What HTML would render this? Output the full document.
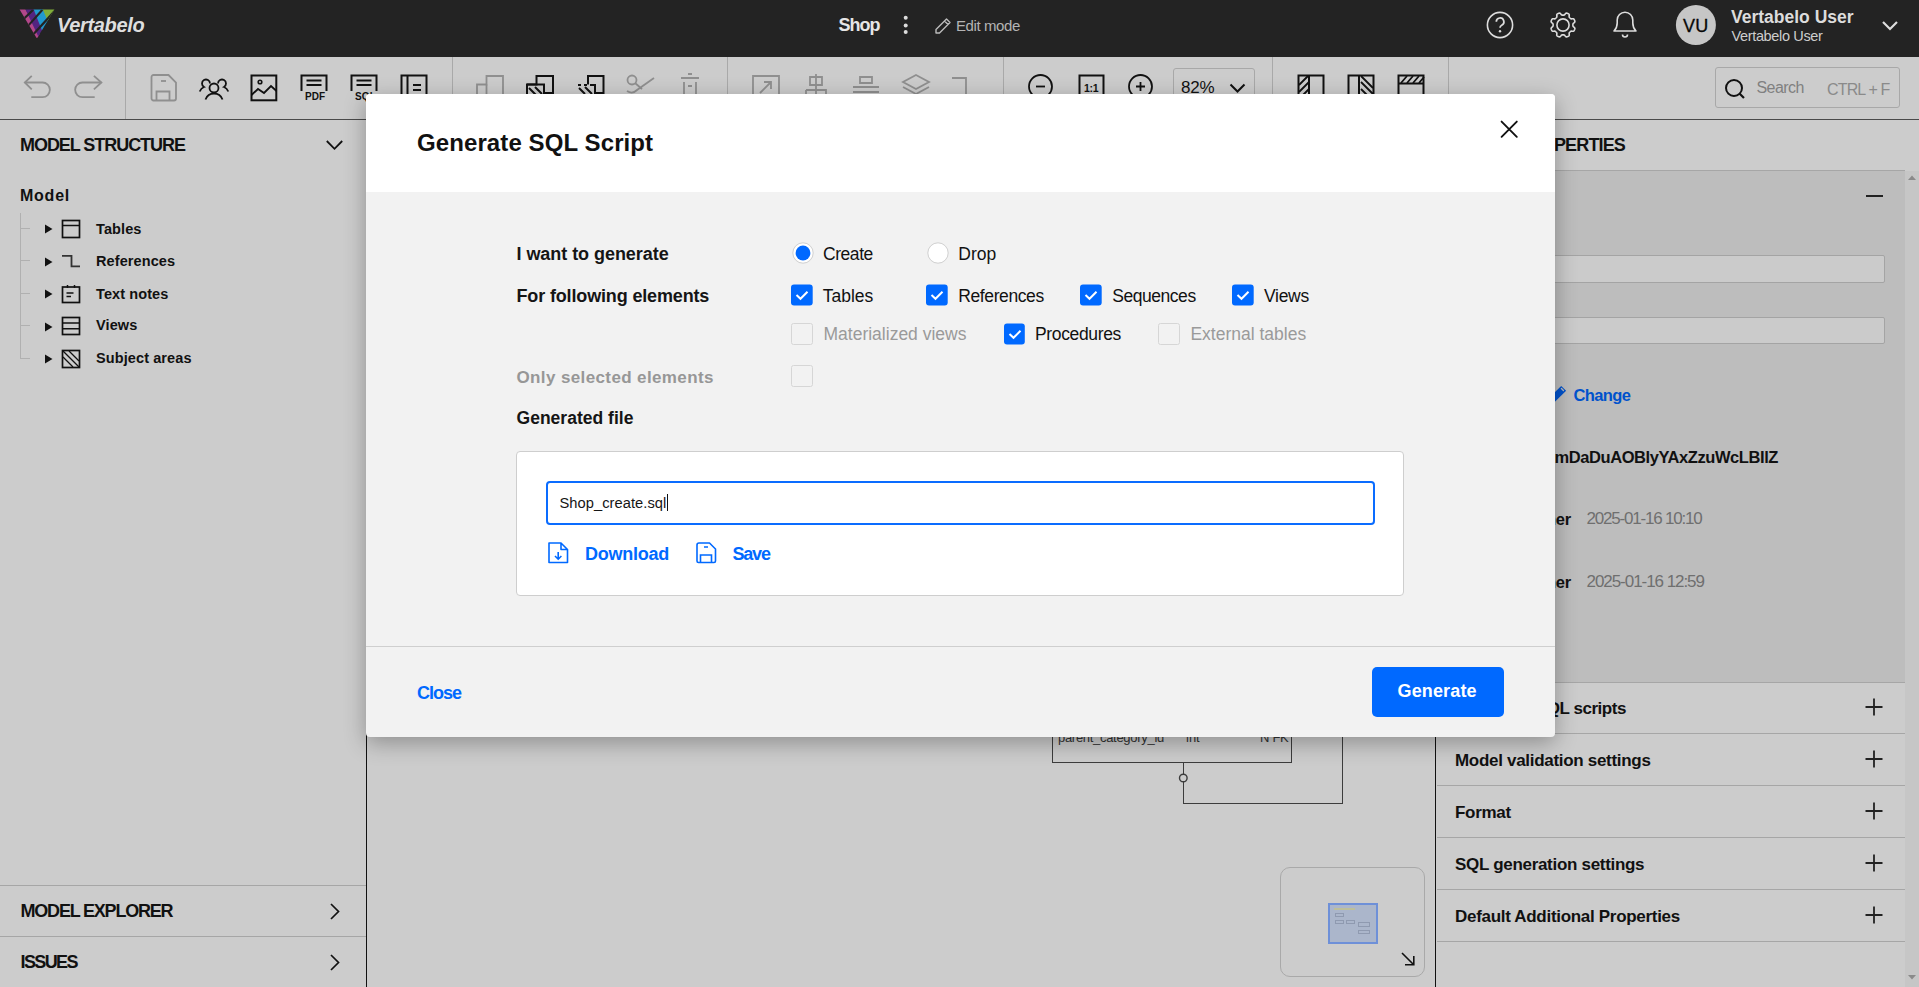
<!DOCTYPE html><html><head><meta charset="utf-8"><style>
html,body{margin:0;padding:0;width:1919px;height:987px;overflow:hidden;background:#cccccc;}
body{position:relative;font-family:"Liberation Sans",sans-serif;}
.t{position:absolute;white-space:nowrap;}
.r{position:absolute;}
.s{position:absolute;overflow:visible;}
</style></head><body>
<div class="r" style="left:0px;top:0px;width:1919px;height:57px;background:#232323;"></div>
<svg class="s" style="left:15px;top:5px;" width="45" height="40" viewBox="0 0 45 40">
<clipPath id="tri"><path d="M4.6 4.6 L39.4 4.6 L21.9 33.6 Z"/></clipPath>
<g clip-path="url(#tri)">
<path d="M0 4 L10.3 4 L27 33 L16 33 Z" fill="#b3478a"/>
<path d="M10.3 4 L18.5 4 L33 30 L24 33 Z" fill="#532480"/>
<path d="M18.5 4 L27.6 4 L40 26 L30 33 Z" fill="#2199cf"/>
<path d="M27.6 4 L42 4 L42 22 L36 24 Z" fill="#80ad3a"/>
<path d="M7.6 13.4 L17.2 4.2 L19 5.6 L9.4 14.8 Z" fill="#232323"/>
<path d="M12.5 19.9 L26.4 4.2 L28.2 5.4 L14.3 21.1 Z" fill="#232323"/>
<path d="M17.6 28.4 L38.6 5.6 L40.4 7 L19.4 29.8 Z" fill="#232323"/>
</g></svg>
<div class="t " style="left:57px;top:14.77px;font-size:20px;line-height:20px;font-weight:700;color:#dedede;letter-spacing:-0.35px;font-style:italic;">Vertabelo</div>
<div class="t " style="left:838.5px;top:15.76px;font-size:18px;line-height:18px;font-weight:700;color:#e6e6e6;letter-spacing:-1.0px;">Shop</div>
<svg class="s" style="left:901px;top:15px;" width="10" height="20" viewBox="0 0 10 20"><circle cx="4.7" cy="2.8" r="2" fill="#ddd"/><circle cx="4.7" cy="10.5" r="2" fill="#ddd"/><circle cx="4.7" cy="17" r="2" fill="#ddd"/></svg>
<svg class="s" style="left:934px;top:16px;" width="19" height="19" viewBox="0 0 19 19"><path d="M2 13.5 L12.5 3 L16 6.5 L5.5 17 L2 17 Z M10.5 5 L14 8.5" fill="none" stroke="#bbb" stroke-width="1.4" stroke-linejoin="round"/></svg>
<div class="t " style="left:956px;top:18.30px;font-size:15px;line-height:15px;font-weight:400;color:#b4b4b4;letter-spacing:-0.4px;">Edit mode</div>
<svg class="s" style="left:1485px;top:10px;" width="30" height="30" viewBox="0 0 30 30"><circle cx="15" cy="15" r="12.6" fill="none" stroke="#ddd" stroke-width="1.6"/><path d="M11.3 11.8 a3.8 3.8 0 1 1 5.4 3.4 c-1.2 0.6 -1.7 1.3 -1.7 2.6" fill="none" stroke="#ddd" stroke-width="1.7"/><circle cx="15" cy="21.2" r="1.2" fill="#ddd"/></svg>
<svg class="s" style="left:1547.5px;top:10px;" width="30" height="30" viewBox="0 0 30 30"><path d="M15.00 5.10 L15.39 5.10 L15.78 5.09 L16.18 5.02 L16.63 4.72 L17.19 4.02 L17.80 3.34 L18.35 3.12 L18.85 3.15 L19.32 3.28 L19.78 3.45 L20.23 3.66 L20.66 3.90 L21.03 4.23 L21.26 4.78 L21.22 5.69 L21.12 6.58 L21.22 7.10 L21.46 7.44 L21.73 7.72 L22.00 8.00 L22.28 8.27 L22.56 8.54 L22.90 8.78 L23.42 8.88 L24.31 8.78 L25.22 8.74 L25.77 8.97 L26.10 9.34 L26.34 9.77 L26.55 10.22 L26.72 10.68 L26.85 11.15 L26.88 11.65 L26.66 12.20 L25.98 12.81 L25.28 13.37 L24.98 13.82 L24.91 14.22 L24.90 14.61 L24.90 15.00 L24.90 15.39 L24.91 15.78 L24.98 16.18 L25.28 16.63 L25.98 17.19 L26.66 17.80 L26.88 18.35 L26.85 18.85 L26.72 19.32 L26.55 19.78 L26.34 20.23 L26.10 20.66 L25.77 21.03 L25.22 21.26 L24.31 21.22 L23.42 21.12 L22.90 21.22 L22.56 21.46 L22.28 21.73 L22.00 22.00 L21.73 22.28 L21.46 22.56 L21.22 22.90 L21.12 23.42 L21.22 24.31 L21.26 25.22 L21.03 25.77 L20.66 26.10 L20.23 26.34 L19.78 26.55 L19.32 26.72 L18.85 26.85 L18.35 26.88 L17.80 26.66 L17.19 25.98 L16.63 25.28 L16.18 24.98 L15.78 24.91 L15.39 24.90 L15.00 24.90 L14.61 24.90 L14.22 24.91 L13.82 24.98 L13.37 25.28 L12.81 25.98 L12.20 26.66 L11.65 26.88 L11.15 26.85 L10.68 26.72 L10.22 26.55 L9.77 26.34 L9.34 26.10 L8.97 25.77 L8.74 25.22 L8.78 24.31 L8.88 23.42 L8.78 22.90 L8.54 22.56 L8.27 22.28 L8.00 22.00 L7.72 21.73 L7.44 21.46 L7.10 21.22 L6.58 21.12 L5.69 21.22 L4.78 21.26 L4.23 21.03 L3.90 20.66 L3.66 20.23 L3.45 19.78 L3.28 19.32 L3.15 18.85 L3.12 18.35 L3.34 17.80 L4.02 17.19 L4.72 16.63 L5.02 16.18 L5.09 15.78 L5.10 15.39 L5.10 15.00 L5.10 14.61 L5.09 14.22 L5.02 13.82 L4.72 13.37 L4.02 12.81 L3.34 12.20 L3.12 11.65 L3.15 11.15 L3.28 10.68 L3.45 10.22 L3.66 9.77 L3.90 9.34 L4.23 8.97 L4.78 8.74 L5.69 8.78 L6.58 8.88 L7.10 8.78 L7.44 8.54 L7.72 8.27 L8.00 8.00 L8.27 7.72 L8.54 7.44 L8.78 7.10 L8.88 6.58 L8.78 5.69 L8.74 4.78 L8.97 4.23 L9.34 3.90 L9.77 3.66 L10.22 3.45 L10.68 3.28 L11.15 3.15 L11.65 3.12 L12.20 3.34 L12.81 4.02 L13.37 4.72 L13.82 5.02 L14.22 5.09 L14.61 5.10 Z" fill="none" stroke="#ddd" stroke-width="1.6" stroke-linejoin="round"/><circle cx="15" cy="15" r="6.1" fill="none" stroke="#ddd" stroke-width="1.6"/></svg>
<svg class="s" style="left:1610px;top:8.2px;" width="30" height="30" viewBox="0 0 30 30"><path d="M4 23 h22 c-2 -2 -3.2 -4 -3.2 -8 v-3 a7.8 7.8 0 0 0 -15.6 0 v3 c0 4 -1.2 6 -3.2 8 Z" fill="none" stroke="#ddd" stroke-width="1.6" stroke-linejoin="round"/><path d="M12.5 26.5 a2.5 2.5 0 0 0 5 0" fill="none" stroke="#ddd" stroke-width="1.6"/></svg>
<svg class="s" style="left:1675px;top:5px;" width="42" height="42" viewBox="0 0 42 42"><circle cx="20.9" cy="20" r="20" fill="#c6c6c6"/></svg>
<div class="t " style="left:1683px;top:16.76px;font-size:18px;line-height:18px;font-weight:400;color:#080808;letter-spacing:0.2px;-webkit-text-stroke:0.3px #080808;">VU</div>
<div class="t " style="left:1731px;top:9.49px;font-size:17.5px;line-height:17.5px;font-weight:700;color:#dcdcdc;letter-spacing:0px;">Vertabelo User</div>
<div class="t " style="left:1731.5px;top:28.93px;font-size:14.5px;line-height:14.5px;font-weight:400;color:#cdcdcd;letter-spacing:-0.35px;">Vertabelo User</div>
<svg class="s" style="left:1880px;top:18px;" width="20" height="14" viewBox="0 0 20 14"><path d="M3 4 L10 11 L17 4" fill="none" stroke="#ddd" stroke-width="2.2"/></svg>
<div class="r" style="left:125px;top:57px;width:1px;height:62px;background:#a9a9a9;"></div>
<div class="r" style="left:451.5px;top:57px;width:1px;height:62px;background:#a9a9a9;"></div>
<div class="r" style="left:727px;top:57px;width:1px;height:62px;background:#a9a9a9;"></div>
<div class="r" style="left:1003px;top:57px;width:1px;height:62px;background:#a9a9a9;"></div>
<div class="r" style="left:1272px;top:57px;width:1px;height:62px;background:#a9a9a9;"></div>
<div class="r" style="left:1448px;top:57px;width:1px;height:62px;background:#a9a9a9;"></div>
<div class="r" style="left:0px;top:119px;width:1919px;height:1px;background:#4a4a4a;"></div>
<svg class="s" style="left:22px;top:74px;" width="32" height="26" viewBox="0 0 32 26"><path d="M2.8 8.5 H20.5 A7.35 7.35 0 0 1 20.5 23.2 H9.3" fill="none" stroke="#8f8f8f" stroke-width="1.8"/><path d="M9.75 1.9 L2.8 8.5 L9.75 15.4" fill="none" stroke="#8f8f8f" stroke-width="1.8"/></svg>
<svg class="s" style="left:73px;top:74px;" width="32" height="26" viewBox="0 0 32 26"><path d="M28.4 8.5 H9.5 A7.35 7.35 0 0 0 9.5 23.2 H21.7" fill="none" stroke="#8f8f8f" stroke-width="1.8"/><path d="M20.9 1.9 L28.4 8.5 L20.9 15.4" fill="none" stroke="#8f8f8f" stroke-width="1.8"/></svg>
<svg class="s" style="left:149px;top:73px;" width="30" height="30" viewBox="0 0 30 30"><path d="M2.5 4 a2 2 0 0 1 2 -2 h15 l7.5 7.5 v16 a2 2 0 0 1 -2 2 h-20.5 a2 2 0 0 1 -2 -2 Z" fill="none" stroke="#8f8f8f" stroke-width="1.8"/><path d="M7.5 27 v-8.5 h13 v8.5" fill="none" stroke="#8f8f8f" stroke-width="1.8"/><path d="M12 8 h5" stroke="#8f8f8f" stroke-width="1.8"/></svg>
<svg class="s" style="left:198px;top:76px;" width="32" height="26" viewBox="0 0 32 26"><circle cx="16" cy="12" r="4.5" fill="none" stroke="#111111" stroke-width="1.8"/><path d="M7.5 23.5 c1.5 -4 4.5 -6 8.5 -6 s7 2 8.5 6" fill="none" stroke="#111111" stroke-width="1.8"/><path d="M12 7.5 a4 4 0 1 0 -6 3.5 c-2 0.8 -3.5 2.5 -4.3 4.5" fill="none" stroke="#111111" stroke-width="1.8"/><path d="M20 7.5 a4 4 0 1 1 6 3.5 c2 0.8 3.5 2.5 4.3 4.5" fill="none" stroke="#111111" stroke-width="1.8"/></svg>
<svg class="s" style="left:249px;top:73px;" width="30" height="30" viewBox="0 0 30 30"><rect x="2.5" y="2.5" width="24.8" height="24.8" fill="none" stroke="#111111" stroke-width="2"/><circle cx="11" cy="9" r="1.8" fill="none" stroke="#111111" stroke-width="1.6"/><path d="M2.5 22 L9 16 L15 20 L22 13 L27.5 18" fill="none" stroke="#111111" stroke-width="1.8"/></svg>
<svg class="s" style="left:299px;top:73px;" width="30" height="20" viewBox="0 0 30 20"><path d="M2.5 18 V2.5 H27.5 V18" fill="none" stroke="#111111" stroke-width="2"/><path d="M7.5 7.5 h15 M7.5 12 h15" stroke="#111111" stroke-width="1.8"/></svg>
<div class="t " style="left:305px;top:92.33px;font-size:10px;line-height:10px;font-weight:700;color:#111111;letter-spacing:0.1px;">PDF</div>
<svg class="s" style="left:349px;top:73px;" width="30" height="20" viewBox="0 0 30 20"><path d="M2.5 18 V2.5 H27.5 V18" fill="none" stroke="#111111" stroke-width="2"/><path d="M7.5 7.5 h15 M7.5 12 h15" stroke="#111111" stroke-width="1.8"/></svg>
<div class="t " style="left:355px;top:92.33px;font-size:10px;line-height:10px;font-weight:700;color:#111111;letter-spacing:0.1px;">SQL</div>
<svg class="s" style="left:399px;top:73px;" width="30" height="22" viewBox="0 0 30 22"><path d="M2.5 22 V2.5 H27.5 V22" fill="none" stroke="#111111" stroke-width="2"/><path d="M8.5 2.5 V22" stroke="#111111" stroke-width="2"/><path d="M14 12 h8 M14 17 h8" stroke="#111111" stroke-width="1.8"/></svg>
<svg class="s" style="left:474px;top:73px;" width="32" height="22" viewBox="0 0 32 22"><path d="M3 22 V11.5 H12.5 V3 H29 V22" fill="none" stroke="#8f8f8f" stroke-width="1.8"/><path d="M12.5 11.5 V22" stroke="#8f8f8f" stroke-width="1.8"/></svg>
<svg class="s" style="left:524px;top:73px;" width="32" height="22" viewBox="0 0 32 22"><path d="M3 22 V11.5 H12.5 V3 H29 V20 H20" fill="none" stroke="#111111" stroke-width="2"/><path d="M3 11.5 H20 V22 M5 15 L12 22 M11 14 L18 21" fill="none" stroke="#111111" stroke-width="2"/></svg>
<svg class="s" style="left:575px;top:73px;" width="32" height="22" viewBox="0 0 32 22"><path d="M13 11.5 V3 H28.5 V20 H20" fill="none" stroke="#111111" stroke-width="2"/><path d="M3 12 H6 M9 12 H12 M15 12 H20 V22 M4 15 L10 21 M10 14 L17 21" fill="none" stroke="#111111" stroke-width="2"/></svg>
<svg class="s" style="left:624px;top:73px;" width="32" height="22" viewBox="0 0 32 22"><circle cx="8" cy="7" r="4.5" fill="none" stroke="#8f8f8f" stroke-width="1.8"/><path d="M11 10 L18 16 M30 5 L13 17 C10 20 6 20 3 18" fill="none" stroke="#8f8f8f" stroke-width="1.8"/></svg>
<svg class="s" style="left:676px;top:73px;" width="28" height="22" viewBox="0 0 28 22"><path d="M5 5 h18 M12 1 h4 M8 9 V22 M20 9 V22 M12 13 h4" fill="none" stroke="#8f8f8f" stroke-width="1.8"/></svg>
<svg class="s" style="left:750px;top:73px;" width="32" height="22" viewBox="0 0 32 22"><path d="M3 22 V3 H29 V22" fill="none" stroke="#8f8f8f" stroke-width="1.8"/><path d="M10 20 L21 9 M14 9 h7 v7" fill="none" stroke="#8f8f8f" stroke-width="1.8"/></svg>
<svg class="s" style="left:802px;top:73px;" width="28" height="22" viewBox="0 0 28 22"><path d="M8 4 h12 v8 h-12 Z M14 1 V22 M4 17 h20 V22 M4 17 V22" fill="none" stroke="#8f8f8f" stroke-width="1.8"/></svg>
<svg class="s" style="left:851px;top:73px;" width="30" height="22" viewBox="0 0 30 22"><path d="M9 4 h12 v6 h-12 Z M2 14 h26 M2 19 h26" fill="none" stroke="#8f8f8f" stroke-width="1.8"/></svg>
<svg class="s" style="left:901px;top:73px;" width="30" height="22" viewBox="0 0 30 22"><path d="M15 2 L28 9 L15 16 L2 9 Z M2 14 L15 21 L28 14" fill="none" stroke="#8f8f8f" stroke-width="1.8"/></svg>
<svg class="s" style="left:951px;top:73px;" width="18" height="22" viewBox="0 0 18 22"><path d="M1 5 h14 V22" fill="none" stroke="#8f8f8f" stroke-width="1.8"/></svg>
<svg class="s" style="left:1027px;top:73px;" width="28" height="22" viewBox="0 0 28 22"><circle cx="13.5" cy="13.5" r="11.5" fill="none" stroke="#111111" stroke-width="1.8"/><path d="M9 13.5 h9" stroke="#111111" stroke-width="1.8"/></svg>
<svg class="s" style="left:1077px;top:73px;" width="30" height="22" viewBox="0 0 30 22"><path d="M2.5 22 V2.5 H26.5 V22" fill="none" stroke="#111111" stroke-width="2"/></svg>
<div class="t " style="left:1084px;top:83.11px;font-size:10.5px;line-height:10.5px;font-weight:700;color:#111111;letter-spacing:-0.3px;">1:1</div>
<svg class="s" style="left:1127px;top:73px;" width="28" height="22" viewBox="0 0 28 22"><circle cx="13.5" cy="13.5" r="11.5" fill="none" stroke="#111111" stroke-width="1.8"/><path d="M9 13.5 h9 M13.5 9 v9" stroke="#111111" stroke-width="1.8"/></svg>
<div class="r" style="left:1172.5px;top:67.5px;width:82px;height:40px;background:none;border:1px solid #a8a8a8;box-sizing:border-box;border-radius:3px;"></div>
<div class="t " style="left:1181px;top:79.11px;font-size:17px;line-height:17px;font-weight:400;color:#111;letter-spacing:-0.2px;">82%</div>
<svg class="s" style="left:1228px;top:82px;" width="20" height="12" viewBox="0 0 20 12"><path d="M2.5 2.5 L9.5 9.5 L16.5 2.5" fill="none" stroke="#111111" stroke-width="2"/></svg>
<svg class="s" style="left:1296px;top:73px;" width="30" height="22" viewBox="0 0 30 22"><path d="M2.5 22 V2.5 H27.5 V22 M13 2.5 V22" fill="none" stroke="#111111" stroke-width="2"/><path d="M3 12 L12 3 M3 19 L13 9 M7 22 L13 16" stroke="#111111" stroke-width="1.8"/></svg>
<svg class="s" style="left:1346px;top:73px;" width="30" height="22" viewBox="0 0 30 22"><path d="M2.5 22 V2.5 H27.5 V22 M13 2.5 V22" fill="none" stroke="#111111" stroke-width="2"/><path d="M15 3 L27 15 M15 9 L27 21 M15 16 L21 22" stroke="#111111" stroke-width="1.8"/></svg>
<svg class="s" style="left:1396px;top:73px;" width="30" height="22" viewBox="0 0 30 22"><path d="M2.5 22 V2.5 H27.5 V22 M2.5 10.5 H27.5" fill="none" stroke="#111111" stroke-width="2"/><path d="M5 10 L11 3 M11 10 L17 3 M17 10 L23 3 M23 10 L28 4" stroke="#111111" stroke-width="1.8"/></svg>
<div class="r" style="left:1715px;top:67px;width:185px;height:40.5px;background:none;border:1px solid #a8a8a8;box-sizing:border-box;border-radius:3px;"></div>
<svg class="s" style="left:1724px;top:78px;" width="24" height="22" viewBox="0 0 24 22"><circle cx="10" cy="10" r="8" fill="none" stroke="#111111" stroke-width="2"/><path d="M15.5 15.5 L20 20" stroke="#111111" stroke-width="2.2"/></svg>
<div class="t " style="left:1756.5px;top:80.46px;font-size:16px;line-height:16px;font-weight:400;color:#808080;letter-spacing:-0.55px;">Search</div>
<div class="t " style="left:1827px;top:81.86px;font-size:16px;line-height:16px;font-weight:400;color:#8a8a8a;letter-spacing:-0.85px;">CTRL + F</div>
<div class="t " style="left:20px;top:136.06px;font-size:18px;line-height:18px;font-weight:700;color:#111;letter-spacing:-1.05px;">MODEL STRUCTURE</div>
<svg class="s" style="left:322.5px;top:137.2px;" width="24" height="16" viewBox="0 0 24 16"><path d="M3.8 4 L11.5 11.8 L19.2 4" fill="none" stroke="#111" stroke-width="1.8"/></svg>
<div class="t " style="left:20px;top:187.96px;font-size:16px;line-height:16px;font-weight:700;color:#111;letter-spacing:0.75px;">Model</div>
<div class="r" style="left:20px;top:213px;width:1px;height:146px;background:#b0b0b0;"></div>
<div class="r" style="left:20px;top:227.9px;width:10px;height:1px;background:#b0b0b0;"></div>
<svg class="s" style="left:44px;top:224.4px;" width="10" height="10" viewBox="0 0 10 10"><path d="M1 0.5 L8.5 5 L1 9.5 Z" fill="#111"/></svg>
<div class="t " style="left:96px;top:221.93px;font-size:14.5px;line-height:14.5px;font-weight:700;color:#111;letter-spacing:0.1px;">Tables</div>
<div class="r" style="left:20px;top:260.3px;width:10px;height:1px;background:#b0b0b0;"></div>
<svg class="s" style="left:44px;top:256.8px;" width="10" height="10" viewBox="0 0 10 10"><path d="M1 0.5 L8.5 5 L1 9.5 Z" fill="#111"/></svg>
<div class="t " style="left:96px;top:254.03px;font-size:14.5px;line-height:14.5px;font-weight:700;color:#111;letter-spacing:0.1px;">References</div>
<div class="r" style="left:20px;top:292.8px;width:10px;height:1px;background:#b0b0b0;"></div>
<svg class="s" style="left:44px;top:289.3px;" width="10" height="10" viewBox="0 0 10 10"><path d="M1 0.5 L8.5 5 L1 9.5 Z" fill="#111"/></svg>
<div class="t " style="left:96px;top:286.53px;font-size:14.5px;line-height:14.5px;font-weight:700;color:#111;letter-spacing:0.1px;">Text notes</div>
<div class="r" style="left:20px;top:325.0px;width:10px;height:1px;background:#b0b0b0;"></div>
<svg class="s" style="left:44px;top:321.5px;" width="10" height="10" viewBox="0 0 10 10"><path d="M1 0.5 L8.5 5 L1 9.5 Z" fill="#111"/></svg>
<div class="t " style="left:96px;top:318.43px;font-size:14.5px;line-height:14.5px;font-weight:700;color:#111;letter-spacing:0.1px;">Views</div>
<div class="r" style="left:20px;top:357.8px;width:10px;height:1px;background:#b0b0b0;"></div>
<svg class="s" style="left:44px;top:354.3px;" width="10" height="10" viewBox="0 0 10 10"><path d="M1 0.5 L8.5 5 L1 9.5 Z" fill="#111"/></svg>
<div class="t " style="left:96px;top:351.23px;font-size:14.5px;line-height:14.5px;font-weight:700;color:#111;letter-spacing:0.1px;">Subject areas</div>
<svg class="s" style="left:61px;top:219px;" width="20" height="20" viewBox="0 0 20 20"><rect x="1.5" y="1.5" width="17" height="17" fill="none" stroke="#111" stroke-width="1.7"/><path d="M1.5 6.5 h17" stroke="#111" stroke-width="1.5"/></svg>
<svg class="s" style="left:61px;top:253px;" width="20" height="16" viewBox="0 0 20 16"><path d="M1 2.8 H10.5 V13.3 H19" fill="none" stroke="#333" stroke-width="1.8"/></svg>
<svg class="s" style="left:61px;top:284px;" width="20" height="20" viewBox="0 0 20 20"><rect x="1.5" y="3" width="17" height="15.5" fill="none" stroke="#111" stroke-width="1.7"/><path d="M6.5 1 v3 M13.5 1 v3 M5.5 9 h7 M5.5 12.6 h4.5" stroke="#111" stroke-width="1.5"/></svg>
<svg class="s" style="left:61px;top:316px;" width="20" height="20" viewBox="0 0 20 20"><rect x="1.5" y="1.5" width="17" height="17" fill="none" stroke="#111" stroke-width="1.7"/><path d="M1.5 7 h17 M1.5 12.8 h17" stroke="#111" stroke-width="1.5"/></svg>
<svg class="s" style="left:61px;top:349px;" width="20" height="20" viewBox="0 0 20 20"><rect x="1.5" y="1.5" width="17" height="17" fill="none" stroke="#111" stroke-width="1.7"/><path d="M2 8 L12 18 M2 2 L18 18 M8 2 L18 12" stroke="#111" stroke-width="1.3"/></svg>
<div class="r" style="left:0px;top:885px;width:366px;height:1px;background:#a6a6a6;"></div>
<div class="t " style="left:20.5px;top:901.76px;font-size:18px;line-height:18px;font-weight:700;color:#111;letter-spacing:-1.2px;">MODEL EXPLORER</div>
<svg class="s" style="left:326px;top:901px;" width="16" height="22" viewBox="0 0 16 22"><path d="M5 3 L12.5 10.5 L5 18" fill="none" stroke="#111" stroke-width="1.7"/></svg>
<div class="r" style="left:0px;top:936px;width:366px;height:1px;background:#a6a6a6;"></div>
<div class="t " style="left:20.5px;top:952.76px;font-size:18px;line-height:18px;font-weight:700;color:#111;letter-spacing:-1.6px;">ISSUES</div>
<svg class="s" style="left:326px;top:952px;" width="16" height="22" viewBox="0 0 16 22"><path d="M5 3 L12.5 10.5 L5 18" fill="none" stroke="#111" stroke-width="1.7"/></svg>
<div class="r" style="left:366px;top:119px;width:1px;height:868px;background:#111;"></div>
<div class="r" style="left:1052.3px;top:700px;width:239.7px;height:62.5px;background:none;border:1.6px solid #3c3c3c;box-sizing:border-box;"></div>
<div class="t " style="left:1058px;top:731.00px;font-size:13px;line-height:13px;font-weight:400;color:#333;letter-spacing:-0.3px;">parent_category_id</div>
<div class="t " style="left:1186px;top:731.00px;font-size:13px;line-height:13px;font-weight:400;color:#333;letter-spacing:0px;">int</div>
<div class="t " style="left:1260px;top:731.00px;font-size:13px;line-height:13px;font-weight:400;color:#333;letter-spacing:-0.3px;">N FK</div>
<div class="r" style="left:1182.5px;top:762px;width:1.7px;height:42px;background:#3c3c3c;"></div>
<div class="r" style="left:1182.5px;top:802.5px;width:160.5px;height:1.7px;background:#3c3c3c;"></div>
<div class="r" style="left:1341.5px;top:700px;width:1.7px;height:104px;background:#3c3c3c;"></div>
<svg class="s" style="left:1177px;top:772px;" width="12" height="12" viewBox="0 0 12 12"><circle cx="6.3" cy="6" r="3.8" fill="#cccccc" stroke="#3c3c3c" stroke-width="1.4"/></svg>
<div class="r" style="left:1279.5px;top:866.5px;width:145.5px;height:110px;background:none;border:1px solid #a9a9a9;box-sizing:border-box;border-radius:10px;"></div>
<div class="r" style="left:1327.5px;top:902.5px;width:50px;height:41.5px;background:#abb6cb;border:2px solid #6e90d8;box-sizing:border-box;"></div>
<div class="r" style="left:1334px;top:908px;width:21px;height:2.2px;background:#bdbf9a;"></div>
<div class="r" style="left:1335px;top:913px;width:9px;height:4px;background:none;border:1px solid #8f9ab0;box-sizing:border-box;"></div>
<div class="r" style="left:1335px;top:919.5px;width:9px;height:4px;background:none;border:1px solid #8f9ab0;box-sizing:border-box;"></div>
<div class="r" style="left:1346px;top:919.5px;width:9px;height:4px;background:none;border:1px solid #8f9ab0;box-sizing:border-box;"></div>
<div class="r" style="left:1358px;top:922px;width:12px;height:5px;background:none;border:1px solid #8f9ab0;box-sizing:border-box;"></div>
<div class="r" style="left:1358px;top:930px;width:12px;height:4px;background:none;border:1px solid #8f9ab0;box-sizing:border-box;"></div>
<svg class="s" style="left:1398.5px;top:949.5px;" width="18" height="18" viewBox="0 0 18 18"><path d="M3 3 L14.5 14.5 M6 14.8 H14.8 V6" fill="none" stroke="#111" stroke-width="1.6"/></svg>
<div class="r" style="left:1435px;top:119px;width:1px;height:868px;background:#111;"></div>
<div class="t" style="right:294px;top:136.16px;font-size:18px;line-height:18px;font-weight:700;color:#111;letter-spacing:-0.85px;">MODEL PROPERTIES</div>
<div class="r" style="left:1437px;top:170px;width:468px;height:1px;background:#a6a6a6;"></div>
<div class="r" style="left:1437px;top:171px;width:468px;height:511px;background:#bdbdbd;"></div>
<div class="r" style="left:1905px;top:171px;width:14px;height:816px;background:#c6c6c6;"></div>
<svg class="s" style="left:1906px;top:172px;" width="12" height="10" viewBox="0 0 12 10"><path d="M2 8 L6 3.5 L10 8 Z" fill="#8a8a8a"/></svg>
<svg class="s" style="left:1906px;top:973px;" width="12" height="10" viewBox="0 0 12 10"><path d="M2 2 L6 6.5 L10 2 Z" fill="#8a8a8a"/></svg>
<div class="r" style="left:1866px;top:195px;width:16.5px;height:2px;background:#222;"></div>
<div class="r" style="left:1437px;top:254.5px;width:448px;height:28px;background:#cbcbcb;border:1px solid #a4a4a4;box-sizing:border-box;border-radius:2px;"></div>
<div class="r" style="left:1437px;top:316.5px;width:448px;height:27.5px;background:#cbcbcb;border:1px solid #a4a4a4;box-sizing:border-box;border-radius:2px;"></div>
<svg class="s" style="left:1553px;top:384px;" width="16" height="20" viewBox="0 0 16 20"><path d="M8.2 1.9 L13.1 6.8 L2.2 17.6 L0 17.6 L0 10 Z" fill="#0052cc"/><path d="M8.4 4.5 L10.4 6.5" stroke="#bdbdbd" stroke-width="1.3" stroke-linecap="round"/></svg>
<div class="t " style="left:1573.5px;top:387.03px;font-size:16.5px;line-height:16.5px;font-weight:700;color:#0052cc;letter-spacing:-0.6px;">Change</div>
<div class="t" style="right:141px;top:449.23px;font-size:16.5px;line-height:16.5px;font-weight:700;color:#111;letter-spacing:-0.42px;">Id xzDmDaDuAOBlyYAxZzuWcLBIlZ</div>
<div class="t" style="right:348px;top:510.63px;font-size:16.5px;line-height:16.5px;font-weight:700;color:#111;letter-spacing:-0.2px;">Owner</div>
<div class="t " style="left:1586.5px;top:510.21px;font-size:17px;line-height:17px;font-weight:400;color:#6f6f6f;letter-spacing:-1.2px;">2025-01-16 10:10</div>
<div class="t" style="right:348px;top:573.83px;font-size:16.5px;line-height:16.5px;font-weight:700;color:#111;letter-spacing:-0.2px;">Owner</div>
<div class="t " style="left:1586.5px;top:573.41px;font-size:17px;line-height:17px;font-weight:400;color:#6f6f6f;letter-spacing:-1.05px;">2025-01-16 12:59</div>
<div class="r" style="left:1437px;top:681.5px;width:468px;height:1px;background:#a6a6a6;"></div>
<div class="t" style="right:293px;top:700.31px;font-size:17px;line-height:17px;font-weight:700;color:#111;letter-spacing:-0.45px;">Model SQL scripts</div>
<svg class="s" style="left:1864px;top:697.4px;" width="20" height="20" viewBox="0 0 20 20"><path d="M10 1.5 V18.5 M1.5 10 H18.5" stroke="#222" stroke-width="1.8"/></svg>
<div class="r" style="left:1437px;top:733.3px;width:468px;height:1px;background:#a6a6a6;"></div>
<div class="t " style="left:1455px;top:752.31px;font-size:17px;line-height:17px;font-weight:700;color:#111;letter-spacing:-0.3px;">Model validation settings</div>
<svg class="s" style="left:1864px;top:749.4px;" width="20" height="20" viewBox="0 0 20 20"><path d="M10 1.5 V18.5 M1.5 10 H18.5" stroke="#222" stroke-width="1.8"/></svg>
<div class="r" style="left:1437px;top:785.0999999999999px;width:468px;height:1px;background:#a6a6a6;"></div>
<div class="t " style="left:1455px;top:804.01px;font-size:17px;line-height:17px;font-weight:700;color:#111;letter-spacing:-0.3px;">Format</div>
<svg class="s" style="left:1864px;top:801.4px;" width="20" height="20" viewBox="0 0 20 20"><path d="M10 1.5 V18.5 M1.5 10 H18.5" stroke="#222" stroke-width="1.8"/></svg>
<div class="r" style="left:1437px;top:836.9px;width:468px;height:1px;background:#a6a6a6;"></div>
<div class="t " style="left:1455px;top:856.01px;font-size:17px;line-height:17px;font-weight:700;color:#111;letter-spacing:-0.3px;">SQL generation settings</div>
<svg class="s" style="left:1864px;top:853.4px;" width="20" height="20" viewBox="0 0 20 20"><path d="M10 1.5 V18.5 M1.5 10 H18.5" stroke="#222" stroke-width="1.8"/></svg>
<div class="r" style="left:1437px;top:888.6999999999999px;width:468px;height:1px;background:#a6a6a6;"></div>
<div class="t " style="left:1455px;top:908.01px;font-size:17px;line-height:17px;font-weight:700;color:#111;letter-spacing:-0.3px;">Default Additional Properties</div>
<svg class="s" style="left:1864px;top:905.4px;" width="20" height="20" viewBox="0 0 20 20"><path d="M10 1.5 V18.5 M1.5 10 H18.5" stroke="#222" stroke-width="1.8"/></svg>
<div class="r" style="left:1437px;top:940.5px;width:468px;height:1px;background:#a6a6a6;"></div>
<div class="r" style="left:366px;top:94px;width:1188.5px;height:643px;border-radius:4px;box-shadow:0 6px 22px rgba(0,0,0,0.3);background:#f2f2f2;overflow:hidden;">
<div class="r" style="left:0;top:0;width:1189px;height:98px;background:#fff;"></div>
<div class="r" style="left:0;top:552px;width:1189px;height:1px;background:#cfcfcf;"></div>
</div>
<div class="t " style="left:417px;top:131.08px;font-size:24px;line-height:24px;font-weight:700;color:#111;letter-spacing:0.1px;">Generate SQL Script</div>
<svg class="s" style="left:1497px;top:117px;" width="24" height="24" viewBox="0 0 24 24"><path d="M4.6 4.6 L19.8 19.8 M19.8 4.6 L4.6 19.8" stroke="#111" stroke-width="1.9" stroke-linecap="round"/></svg>
<div class="t " style="left:516.5px;top:244.76px;font-size:18px;line-height:18px;font-weight:700;color:#151515;letter-spacing:-0.05px;">I want to generate</div>
<div class="t " style="left:516.5px;top:286.66px;font-size:18px;line-height:18px;font-weight:700;color:#151515;letter-spacing:-0.15px;">For following elements</div>
<div class="t " style="left:516.5px;top:369.21px;font-size:17px;line-height:17px;font-weight:700;color:#979797;letter-spacing:0.38px;">Only selected elements</div>
<div class="t " style="left:516.5px;top:409.89px;font-size:17.5px;line-height:17.5px;font-weight:700;color:#151515;letter-spacing:0.02px;">Generated file</div>
<svg class="s" style="left:791.5px;top:242.1px;" width="22" height="22" viewBox="0 0 22 22"><circle cx="11" cy="11" r="10.2" fill="#fff" stroke="#d0d0d0" stroke-width="1"/><circle cx="11" cy="11" r="7.4" fill="#0069ff"/></svg>
<div class="t " style="left:823px;top:246.09px;font-size:17.5px;line-height:17.5px;font-weight:400;color:#111;letter-spacing:-0.45px;">Create</div>
<svg class="s" style="left:926.7px;top:242.1px;" width="22" height="22" viewBox="0 0 22 22"><circle cx="11" cy="11" r="10.2" fill="#fff" stroke="#d0d0d0" stroke-width="1"/></svg>
<div class="t " style="left:958.3px;top:246.09px;font-size:17.5px;line-height:17.5px;font-weight:400;color:#111;letter-spacing:0px;">Drop</div>
<svg class="s" style="left:791.2px;top:283.5px;" width="22" height="22" viewBox="0 0 22 22"><rect x="0" y="0.5" width="21.7" height="21" rx="3" fill="#0069ff"/><path d="M5.5 11 L9.5 14.8 L16.5 7.8" fill="none" stroke="#fff" stroke-width="2"/></svg>
<div class="t " style="left:822.7px;top:288.09px;font-size:17.5px;line-height:17.5px;font-weight:400;color:#111;letter-spacing:0px;">Tables</div>
<svg class="s" style="left:926.2px;top:283.5px;" width="22" height="22" viewBox="0 0 22 22"><rect x="0" y="0.5" width="21.7" height="21" rx="3" fill="#0069ff"/><path d="M5.5 11 L9.5 14.8 L16.5 7.8" fill="none" stroke="#fff" stroke-width="2"/></svg>
<div class="t " style="left:958.3px;top:288.09px;font-size:17.5px;line-height:17.5px;font-weight:400;color:#111;letter-spacing:-0.4px;">References</div>
<svg class="s" style="left:1080px;top:283.5px;" width="22" height="22" viewBox="0 0 22 22"><rect x="0" y="0.5" width="21.7" height="21" rx="3" fill="#0069ff"/><path d="M5.5 11 L9.5 14.8 L16.5 7.8" fill="none" stroke="#fff" stroke-width="2"/></svg>
<div class="t " style="left:1112.2px;top:288.09px;font-size:17.5px;line-height:17.5px;font-weight:400;color:#111;letter-spacing:-0.45px;">Sequences</div>
<svg class="s" style="left:1232px;top:283.5px;" width="22" height="22" viewBox="0 0 22 22"><rect x="0" y="0.5" width="21.7" height="21" rx="3" fill="#0069ff"/><path d="M5.5 11 L9.5 14.8 L16.5 7.8" fill="none" stroke="#fff" stroke-width="2"/></svg>
<div class="t " style="left:1264px;top:288.09px;font-size:17.5px;line-height:17.5px;font-weight:400;color:#111;letter-spacing:-0.3px;">Views</div>
<svg class="s" style="left:791.4px;top:322.7px;" width="22" height="22" viewBox="0 0 22 22"><rect x="0.5" y="0.5" width="21" height="21" rx="2" fill="none" stroke="#d6d6d6" stroke-width="1"/></svg>
<div class="t " style="left:823.5px;top:326.29px;font-size:17.5px;line-height:17.5px;font-weight:400;color:#9a9a9a;letter-spacing:0px;">Materialized views</div>
<svg class="s" style="left:1004.2px;top:322.7px;" width="22" height="22" viewBox="0 0 22 22"><rect x="0" y="0.5" width="20.8" height="21" rx="3" fill="#0069ff"/><path d="M5.5 11 L9.5 14.8 L16.5 7.8" fill="none" stroke="#fff" stroke-width="2"/></svg>
<div class="t " style="left:1035px;top:326.29px;font-size:17.5px;line-height:17.5px;font-weight:400;color:#111;letter-spacing:-0.35px;">Procedures</div>
<svg class="s" style="left:1158.4px;top:322.7px;" width="22" height="22" viewBox="0 0 22 22"><rect x="0.5" y="0.5" width="21" height="21" rx="2" fill="none" stroke="#d6d6d6" stroke-width="1"/></svg>
<div class="t " style="left:1190.4px;top:326.29px;font-size:17.5px;line-height:17.5px;font-weight:400;color:#9a9a9a;letter-spacing:0px;">External tables</div>
<svg class="s" style="left:791.3px;top:365px;" width="22" height="22" viewBox="0 0 22 22"><rect x="0.5" y="0.5" width="21" height="21" rx="2" fill="none" stroke="#d6d6d6" stroke-width="1"/></svg>
<div class="r" style="left:516px;top:451px;width:888px;height:145px;background:#fff;border:1px solid #cecece;box-sizing:border-box;border-radius:4px;"></div>
<div class="r" style="left:546px;top:481px;width:829px;height:44px;background:#fff;border:2px solid #0a6cff;box-sizing:border-box;border-radius:4px;"></div>
<div class="t " style="left:559.5px;top:495.56px;font-size:14.7px;line-height:14.7px;font-weight:400;color:#151515;letter-spacing:0.05px;">Shop_create.sql</div>
<div class="r" style="left:667px;top:493.5px;width:1.3px;height:17px;background:#111;"></div>
<svg class="s" style="left:547px;top:541px;" width="24" height="24" viewBox="0 0 24 24"><path d="M2 2 H14 L20.5 8.5 V21.5 H2 Z M14 2 V8.5 H20.5" fill="none" stroke="#0069ff" stroke-width="1.6" stroke-linejoin="round"/><path d="M11.2 11 V18 M8 15 L11.2 18.2 L14.4 15" fill="none" stroke="#0069ff" stroke-width="1.6"/></svg>
<div class="t " style="left:585px;top:544.56px;font-size:18px;line-height:18px;font-weight:700;color:#0069ff;letter-spacing:-0.25px;">Download</div>
<svg class="s" style="left:695px;top:541px;" width="24" height="24" viewBox="0 0 24 24"><path d="M2 4 a2 2 0 0 1 2 -2 h10.5 l6 6 v12 a1.5 1.5 0 0 1 -1.5 1.5 h-15.5 a1.5 1.5 0 0 1 -1.5 -1.5 Z" fill="none" stroke="#0069ff" stroke-width="1.6" stroke-linejoin="round"/><path d="M5.5 21 v-7 h11 v7 M9 6 h4" fill="none" stroke="#0069ff" stroke-width="1.6"/></svg>
<div class="t " style="left:732.5px;top:544.56px;font-size:18px;line-height:18px;font-weight:700;color:#0069ff;letter-spacing:-1.2px;">Save</div>
<div class="t " style="left:417px;top:683.56px;font-size:18px;line-height:18px;font-weight:700;color:#0069ff;letter-spacing:-1.0px;">Close</div>
<div class="r" style="left:1372px;top:667px;width:132px;height:50px;background:#0069ff;border-radius:5px;"></div>
<div class="t " style="left:1397.5px;top:681.86px;font-size:18px;line-height:18px;font-weight:700;color:#fff;letter-spacing:0.15px;">Generate</div>
</body></html>
